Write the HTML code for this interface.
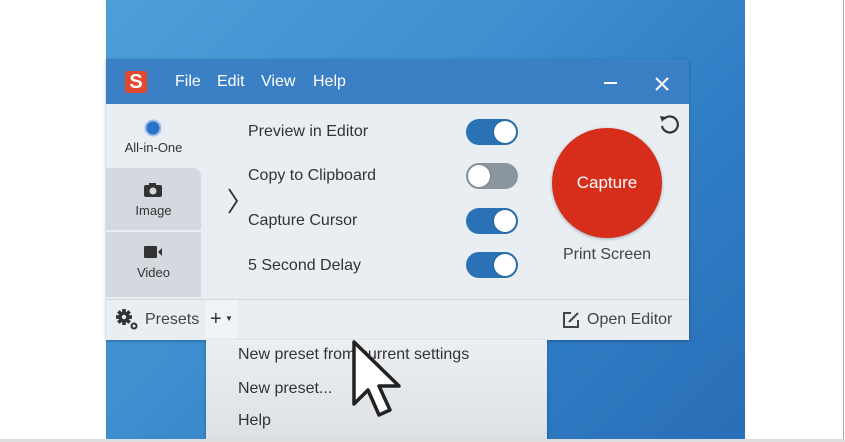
<!DOCTYPE html>
<html><head><style>
*{margin:0;padding:0;box-sizing:border-box}
body{width:845px;height:442px;background:#fff;position:relative;overflow:hidden;font-family:"Liberation Sans",sans-serif}
.bg{position:absolute;left:106px;top:0;width:639px;height:439px;background:linear-gradient(135deg,#4d9fd8 0%,#3d8fd0 40%,#2f7cc4 70%,#2a6fb8 100%)}
.edge{position:absolute;right:1px;top:0;width:1px;height:442px;background:#aaa}
.bot{position:absolute;left:0;top:439px;width:845px;height:3px;background:#ddd}
.win{position:absolute;left:106px;top:59px;width:583px;height:281px;background:#e9eef3;box-shadow:0 1px 3px rgba(0,0,0,.3)}
.title{position:absolute;left:0;top:0;width:583px;height:45px;background:#3b7fc4}
.logo{position:absolute;left:19px;top:12px;width:22px;height:22px;background:#e2492f;border-radius:3px;color:#fff;font-weight:bold;font-size:20px;line-height:22px;text-align:center}
.menu{position:absolute;top:14px;color:#fff;font-size:16px}
.t{position:absolute;color:#333;font-size:16px}
.tab{position:absolute;left:0;width:95px;background:#d3d9df;border-radius:0 8px 0 0}
.tog{position:absolute;left:360px;width:52px;height:26px;border-radius:13px;background:#2a72b5}
.tog::after{content:"";position:absolute;right:2px;top:2px;width:22px;height:22px;border-radius:50%;background:#fff;box-shadow:0 0 2px rgba(0,0,0,.3)}
.tog.off{background:#8a969f}.tog.off::after{right:auto;left:2px}
.cap{position:absolute;left:446px;top:69px;width:110px;height:110px;border-radius:50%;background:#d62e1b;color:#fff;font-size:17px;text-align:center;line-height:110px;box-shadow:0 1px 3px rgba(0,0,0,.3)}
.foot{position:absolute;left:0;top:240px;width:583px;height:41px;border-top:1px solid #cfd6dc}
.dd{position:absolute;left:206px;top:340px;width:341px;height:99px;background:linear-gradient(#eceff2,#dde1e5);box-shadow:0 1px 3px rgba(0,0,0,.3)}
.dd div{position:absolute;left:32px;color:#333;font-size:16px}
</style></head><body>
<div class="bg"></div>
<div class="win">
 <div class="title">
  <div class="logo">S</div>
  <div class="menu" style="left:69px">File</div>
  <div class="menu" style="left:111px">Edit</div>
  <div class="menu" style="left:155px">View</div>
  <div class="menu" style="left:207px">Help</div>
  <div style="position:absolute;left:498px;top:23px;width:13px;height:2px;background:#fff"></div>
  <svg style="position:absolute;left:549px;top:18px" width="14" height="14"><path d="M1 1L13 13M13 1L1 13" stroke="#fff" stroke-width="2"/></svg>
 </div>
 <svg style="position:absolute;left:38px;top:60px" width="18" height="18"><circle cx="9" cy="9" r="7.5" fill="#2a72c8" stroke="#9cc0e8" stroke-width="2"/></svg>
 <div class="t" style="left:0;width:95px;text-align:center;top:81px;font-size:13px">All-in-One</div>
 <div class="tab" style="top:109px;height:62px"></div>
 <svg style="position:absolute;left:37px;top:123px" width="20" height="16"><rect x="1" y="3" width="18" height="12" rx="2" fill="#333"/><rect x="6" y="1" width="7" height="3" fill="#333"/><circle cx="10" cy="9" r="3.5" fill="#d3d9df"/></svg>
 <div class="t" style="left:0;width:95px;text-align:center;top:144px;font-size:13px">Image</div>
 <div class="tab" style="top:173px;height:65px;border-radius:0"></div>
 <svg style="position:absolute;left:37px;top:186px" width="20" height="14"><rect x="1" y="1" width="13" height="12" rx="1" fill="#333"/><path d="M15 7L19 3V11Z" fill="#333"/></svg>
 <div class="t" style="left:0;width:95px;text-align:center;top:206px;font-size:13px">Video</div>
 <svg style="position:absolute;left:121px;top:128px" width="12" height="28"><path d="M2 2L10 14L2 26" stroke="#333" stroke-width="1.8" fill="none"/></svg>
 <div class="t" style="left:142px;top:64px">Preview in Editor</div>
 <div class="t" style="left:142px;top:108px">Copy to Clipboard</div>
 <div class="t" style="left:142px;top:153px">Capture Cursor</div>
 <div class="t" style="left:142px;top:198px">5 Second Delay</div>
 <div class="tog" style="top:60px"></div>
 <div class="tog off" style="top:104px"></div>
 <div class="tog" style="top:149px"></div>
 <div class="tog" style="top:193px"></div>
 <svg style="position:absolute;left:552px;top:54px" width="22" height="22"><path d="M6 6A8 8 0 1 1 4 13" stroke="#333" stroke-width="2.2" fill="none"/><path d="M2 3L8 4L4 9Z" fill="#333"/></svg>
 <div class="cap">Capture</div>
 <div class="t" style="left:457px;top:187px;color:#444">Print Screen</div>
 <div class="foot">
  <div style="position:absolute;left:99px;top:0;width:33px;height:40px;background:#f1f4f7"></div>
  <svg style="position:absolute;left:9px;top:8px" width="24" height="24"><g transform="translate(9 9)" fill="#333"><rect x="-1.8" y="-8" width="3.6" height="16"/><rect x="-1.8" y="-8" width="3.6" height="16" transform="rotate(45)"/><rect x="-1.8" y="-8" width="3.6" height="16" transform="rotate(90)"/><rect x="-1.8" y="-8" width="3.6" height="16" transform="rotate(135)"/><circle r="5.5"/><circle r="2.2" fill="#e9eef3"/></g><circle cx="19" cy="18" r="2.5" fill="none" stroke="#333" stroke-width="2"/></svg>
  <div class="t" style="left:39px;top:11px;color:#444">Presets</div>
  <div class="t" style="left:104px;top:8px;font-size:20px">+</div>
  <div class="t" style="left:119px;top:14px;font-size:8px">▼</div>
  <svg style="position:absolute;left:455px;top:10px" width="20" height="20"><path d="M10 3H3V17H17V10" stroke="#444" stroke-width="2" fill="none"/><path d="M8 12L17 3" stroke="#444" stroke-width="2"/></svg>
  <div class="t" style="left:481px;top:11px;color:#444">Open Editor</div>
 </div>
</div>
<div class="dd">
 <div style="top:6px">New preset from current settings</div>
 <div style="top:40px">New preset...</div>
 <div style="top:72px">Help</div>
</div>
<svg style="position:absolute;left:346px;top:338px" width="66" height="86"><path d="M8 4V66L22 52L33 77L44 72L33 48L53 48Z" fill="#fff" stroke="#222" stroke-width="3.5" stroke-linejoin="round"/></svg>
<div class="edge"></div>
<div class="bot"></div>
</body></html>
